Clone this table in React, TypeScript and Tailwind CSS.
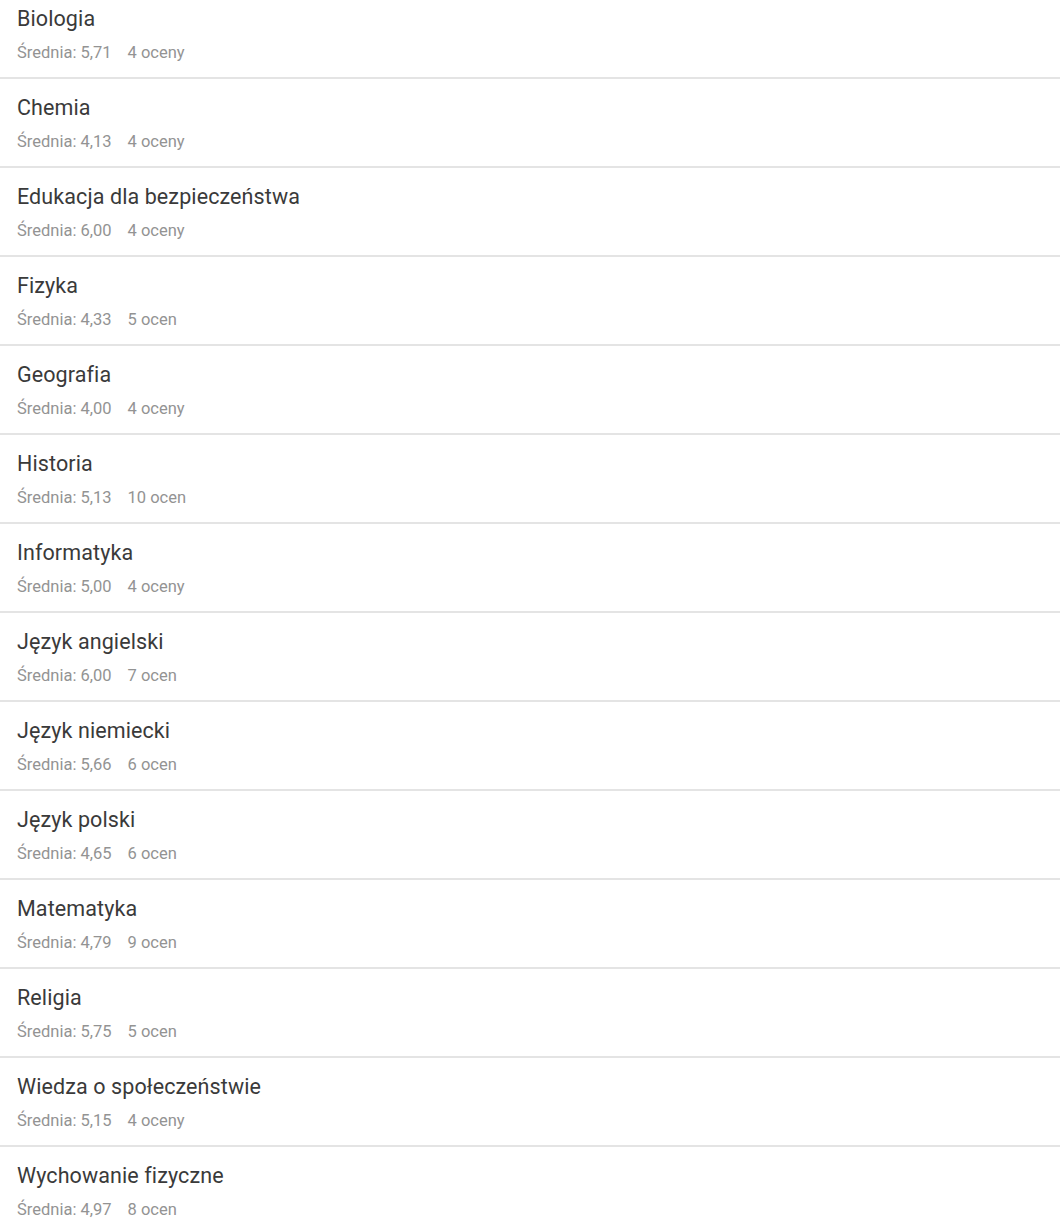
import React from "react";

const subjects: [string, string, string][] = [
  ["Biologia", "5,71", "4 oceny"],
  ["Chemia", "4,13", "4 oceny"],
  ["Edukacja dla bezpieczeństwa", "6,00", "4 oceny"],
  ["Fizyka", "4,33", "5 ocen"],
  ["Geografia", "4,00", "4 oceny"],
  ["Historia", "5,13", "10 ocen"],
  ["Informatyka", "5,00", "4 oceny"],
  ["Język angielski", "6,00", "7 ocen"],
  ["Język niemiecki", "5,66", "6 ocen"],
  ["Język polski", "4,65", "6 ocen"],
  ["Matematyka", "4,79", "9 ocen"],
  ["Religia", "5,75", "5 ocen"],
  ["Wiedza o społeczeństwie", "5,15", "4 oceny"],
  ["Wychowanie fizyczne", "4,97", "8 ocen"],
];

export default function App() {
  return (
    <div className="w-[1060px] h-[1221px] overflow-hidden bg-white" style={{ fontFamily: "Roboto, 'Noto Sans', sans-serif" }}>
      <div className="-mt-[10px] flex flex-col">
        {subjects.map(([name, avg, count]) => (
          <div key={name} className="h-[89px] border-b-2 border-[#e4e4e4] pl-[17px] pt-[17px]">
            <div className="text-[21.5px] leading-[24px] text-[#3a3a3a] tracking-[0.1px]">{name}</div>
            <div className="mt-[12px] text-[16.5px] leading-[20px] text-[#939393] flex gap-[16px]">
              <span>Średnia: {avg}</span>
              <span>{count}</span>
            </div>
          </div>
        ))}
      </div>
    </div>
  );
}
